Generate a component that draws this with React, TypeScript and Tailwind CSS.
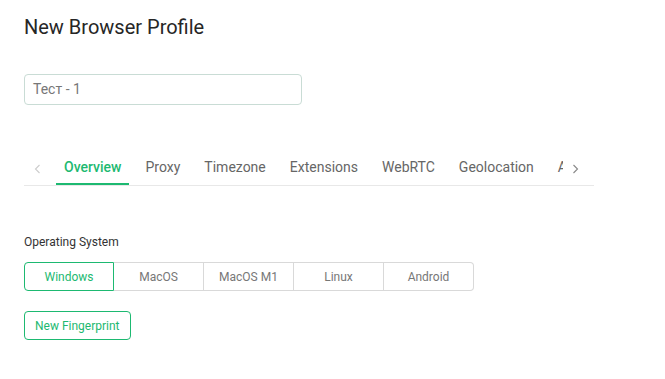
const tabs = ["Overview", "Proxy", "Timezone", "Extensions", "WebRTC", "Geolocation", "Advanced"];
const systems = ["Windows", "MacOS", "MacOS M1", "Linux", "Android"];

export default function App() {
  return (
    <div className="w-[665px] h-[379px] bg-white px-6 pt-[14px] font-['Roboto',sans-serif] text-[#333]">
      <h1 className="text-[20px] leading-[26px] text-[#262626]">New Browser Profile</h1>

      <div className="mt-[34px] w-[278px] h-[31px] rounded border border-[#c9dcd5] flex items-center px-2 text-[14px] text-[#777]">
        Тест - 1
      </div>

      {/* tabs */}
      <div className="mt-[47px] w-[570px] h-[34px] border-b border-[#e8e8e8] flex items-stretch">
        <div className="w-7 flex items-center justify-center text-[#ccc]">
          <svg width="8" height="10" viewBox="0 0 8 10" fill="none" stroke="currentColor" strokeWidth="1.1">
            <path d="M5.5 1 L1.5 5 L5.5 9" />
          </svg>
        </div>
        <div className="flex-1 overflow-hidden relative">
          <div className="flex gap-6 pl-3 whitespace-nowrap h-full">
            {tabs.map((t, i) => (
              <div
                key={t}
                className={
                  i === 0
                    ? "relative flex items-center text-[14px] font-medium text-[#1db971] pb-[2px]"
                    : "relative flex items-center text-[14px] text-[#666] pb-[2px]"
                }
              >
                {t}
                {i === 0 && <div className="absolute left-[-8px] right-[-8px] bottom-0 h-[2px] bg-[#1db971]" />}
              </div>
            ))}
          </div>
        </div>
        <div className="w-[31px] flex items-center justify-start pl-2 text-[#888]">
          <svg width="8" height="10" viewBox="0 0 8 10" fill="none" stroke="currentColor" strokeWidth="1.1">
            <path d="M2.5 1 L6.5 5 L2.5 9" />
          </svg>
        </div>
      </div>

      <div className="mt-[49px] text-[12px] leading-[14px] text-[#333]">Operating System</div>

      <div className="mt-[13px] flex w-[450px] h-[29px] text-[12px]">
        {systems.map((s, i) => (
          <div
            key={s}
            className={
              i === 0
                ? "w-[90px] flex items-center justify-center border border-[#1db971] text-[#1db971] rounded-l"
                : i === systems.length - 1
                ? "w-[90px] flex items-center justify-center border border-l-0 border-[#d9d9d9] text-[#777] rounded-r"
                : "w-[90px] flex items-center justify-center border border-l-0 border-[#d9d9d9] text-[#777]"
            }
          >
            {s}
          </div>
        ))}
      </div>

      <button className="mt-[20px] h-[29px] px-[10px] rounded border border-[#1db971] text-[#1db971] text-[12px]">
        New Fingerprint
      </button>
    </div>
  );
}
